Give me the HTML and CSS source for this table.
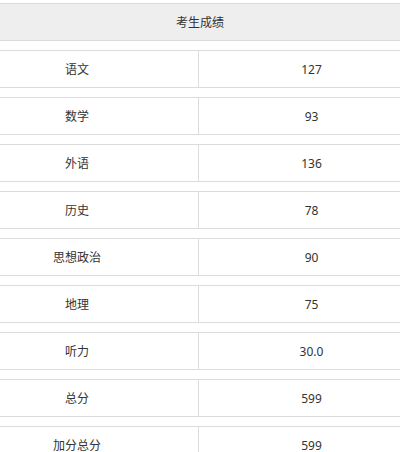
FILE: index.html
```html
<!DOCTYPE html>
<html lang="zh-CN">
<head>
<meta charset="utf-8">
<link rel="stylesheet" href="styles.css">
</head>
<body>
<div class="score-list">
  <div class="score-head">考生成绩</div>
  <div class="score-row"><div class="cell name">语文</div><div class="cell value">127</div></div>
  <div class="score-row"><div class="cell name">数学</div><div class="cell value">93</div></div>
  <div class="score-row"><div class="cell name">外语</div><div class="cell value">136</div></div>
  <div class="score-row"><div class="cell name">历史</div><div class="cell value">78</div></div>
  <div class="score-row"><div class="cell name">思想政治</div><div class="cell value">90</div></div>
  <div class="score-row"><div class="cell name">地理</div><div class="cell value">75</div></div>
  <div class="score-row"><div class="cell name">听力</div><div class="cell value">30.0</div></div>
  <div class="score-row"><div class="cell name">总分</div><div class="cell value">599</div></div>
  <div class="score-row"><div class="cell name">加分总分</div><div class="cell value">599</div></div>
</div>
</body>
</html>
```

FILE: styles.css
```css
html, body {
  margin: 0;
  padding: 0;
  background: #fff;
}
body {
  font-family: "Noto Sans", "Noto Sans CJK SC", sans-serif;
  font-size: 12px;
  color: #333;
}
.score-list {
  display: flex;
  flex-direction: column;
  gap: 9px;
  padding-top: 3px;
}
.score-head {
  height: 36px;
  border-top: 1px solid #dcdcdc;
  border-bottom: 1px solid #dcdcdc;
  background: #eeeeee;
  display: flex;
  align-items: center;
  justify-content: center;
}
.score-row {
  height: 36px;
  border-top: 1px solid #dcdcdc;
  border-bottom: 1px solid #dcdcdc;
  display: grid;
  grid-template-columns: 199px 1fr;
}
.cell {
  display: flex;
  align-items: center;
  justify-content: center;
}
.name {
  border-right: 1px solid #dcdcdc;
  padding-right: 44px;
}
.value {
  padding-left: 24px;
}
```
